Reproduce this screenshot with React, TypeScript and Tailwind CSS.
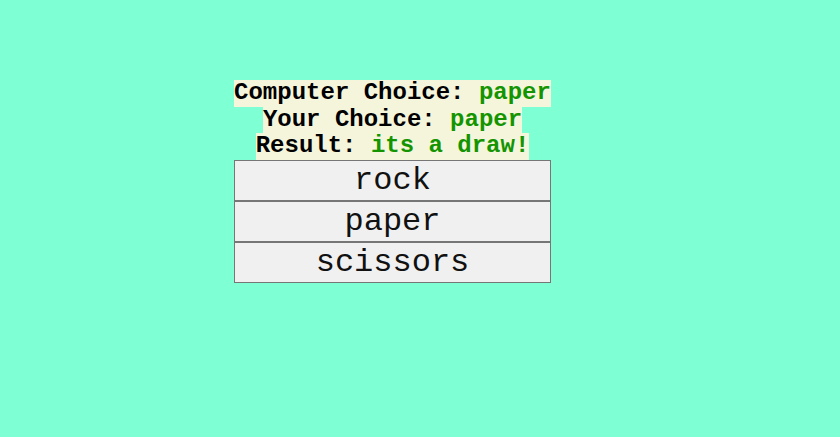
export default function App() {
  const mono = { fontFamily: '"Liberation Mono", "Courier New", monospace' };
  const lines: [string, string][] = [
    ["Computer Choice: ", "paper"],
    ["Your Choice: ", "paper"],
    ["Result: ", "its a draw!"],
  ];
  return (
    <div className="min-h-screen w-full bg-[#7fffd4] pt-[80px] pl-[234px]" style={mono}>
      <div className="flex w-[317px] flex-col">
        {lines.map(([label, value], i) => (
          <div key={i} className="flex justify-center">
            <span className="inline-block whitespace-pre bg-[#f5f5dc] text-[24px] font-bold leading-[26.67px] text-black">
              {label}
              <span className="text-[#139400]">{value}</span>
            </span>
          </div>
        ))}
        {["rock", "paper", "scissors"].map((b) => (
          <button
            key={b}
            className="flex h-[41px] w-[317px] items-center justify-center border border-[#767676] bg-[#f0f0f0] text-[32px] leading-none text-[#111]"
            style={mono}
          >
            {b}
          </button>
        ))}
      </div>
    </div>
  );
}
